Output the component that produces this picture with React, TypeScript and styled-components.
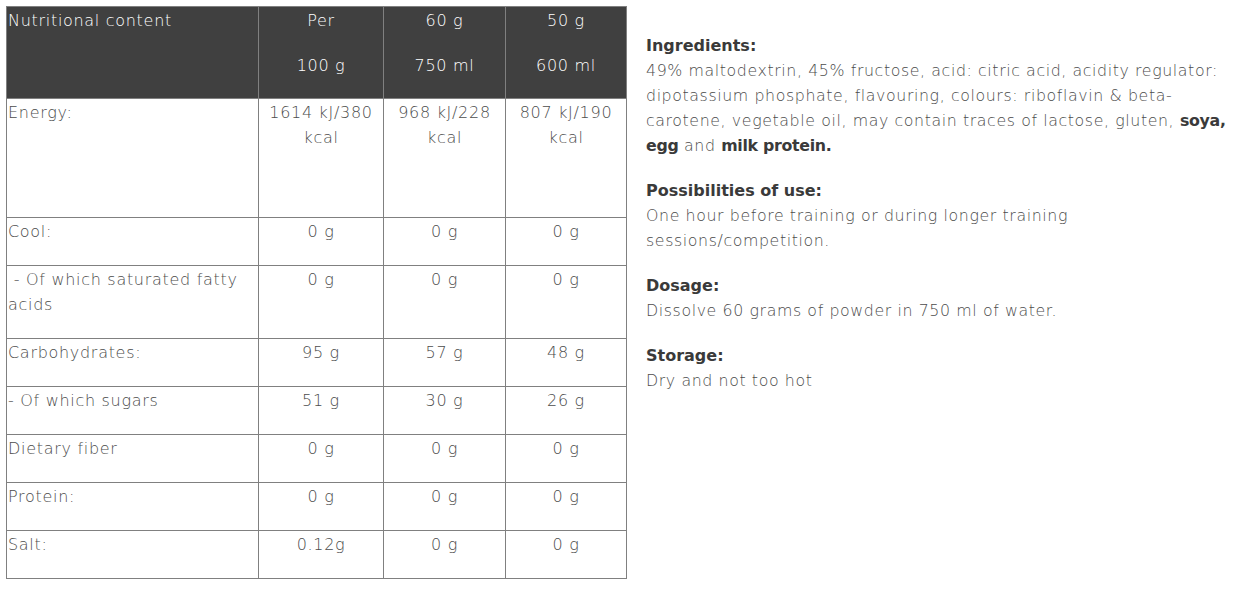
import React from "react";
import styled, { createGlobalStyle } from "styled-components";

const Global = createGlobalStyle`
  html, body { margin: 0; padding: 0; background: #fff; }
  body { font-family: "DejaVu Sans", sans-serif; }
`;

const Page = styled.div`
  display: flex;
  align-items: flex-start;
  gap: 19px;
  padding: 6px;
`;

const Table = styled.table`
  border-collapse: collapse;
  width: 620px;
  flex: none;
  table-layout: fixed;
  font-family: "DejaVu Sans", sans-serif;
  font-weight: 300;
  font-size: 16px;
  letter-spacing: 0.7px;
  line-height: 25px;
  color: #4c4c4c;
`;

const HeadCell = styled.th<{ $align?: string }>`
  background: #404040;
  color: #fff;
  font-weight: 300;
  border: 1px solid #808080;
  text-align: ${(p) => p.$align || "center"};
  vertical-align: top;
  padding: 1px 1px 19px;
  height: 92px;
  box-sizing: border-box;
`;

const HeadLine = styled.span`
  display: block;
  & + & { margin-top: 20px; }
`;

const Cell = styled.td<{ $align?: string; $h?: number }>`
  border: 1px solid #808080;
  text-align: ${(p) => p.$align || "center"};
  vertical-align: top;
  padding: 1px 1px 0;
  height: ${(p) => p.$h || 48}px;
  box-sizing: border-box;
`;

const Side = styled.div`
  padding-top: 27px;
  font-family: "DejaVu Sans", sans-serif;
  font-size: 15.8px;
  letter-spacing: 0.6px;
  line-height: 25px;
  color: #4c4c4c;
  font-weight: 300;
  white-space: nowrap;
`;

const Section = styled.section`
  margin-bottom: 20px;
`;

const Title = styled.h3`
  margin: 0;
  font-size: 16px;
  font-weight: 700;
  letter-spacing: 0;
  color: #3a3a3a;
  line-height: 25px;
`;

const Text = styled.p`
  margin: 0;
`;

const Strong = styled.strong`
  font-weight: 700;
  letter-spacing: -0.3px;
  color: #3a3a3a;
`;

type Row = { label: string; v: [string, string, string]; h?: number };

const rows: Row[] = [
  { label: "Energy:", v: ["1614 kJ/380 kcal", "968 kJ/228 kcal", "807 kJ/190 kcal"], h: 119 },
  { label: "Cool:", v: ["0 g", "0 g", "0 g"] },
  { label: "\u00a0- Of which saturated fatty acids", v: ["0 g", "0 g", "0 g"], h: 73 },
  { label: "Carbohydrates:", v: ["95 g", "57 g", "48 g"] },
  { label: "- Of which sugars", v: ["51 g", "30 g", "26 g"] },
  { label: "Dietary fiber", v: ["0 g", "0 g", "0 g"] },
  { label: "Protein:", v: ["0 g", "0 g", "0 g"] },
  { label: "Salt:", v: ["0.12g", "0 g", "0 g"] },
];

export default function App() {
  return (
    <>
      <Global />
      <Page>
        <Table>
          <colgroup>
            <col style={{ width: 252 }} />
            <col style={{ width: 125 }} />
            <col style={{ width: 122 }} />
            <col style={{ width: 121 }} />
          </colgroup>
          <thead>
            <tr>
              <HeadCell $align="left">Nutritional content</HeadCell>
              <HeadCell>
                <HeadLine>Per</HeadLine>
                <HeadLine>100 g</HeadLine>
              </HeadCell>
              <HeadCell>
                <HeadLine>60 g</HeadLine>
                <HeadLine>750 ml</HeadLine>
              </HeadCell>
              <HeadCell>
                <HeadLine>50 g</HeadLine>
                <HeadLine>600 ml</HeadLine>
              </HeadCell>
            </tr>
          </thead>
          <tbody>
            {rows.map((r) => (
              <tr key={r.label}>
                <Cell $align="left" $h={r.h}>{r.label}</Cell>
                {r.v.map((x, i) => (
                  <Cell key={i} $h={r.h}>{x}</Cell>
                ))}
              </tr>
            ))}
          </tbody>
        </Table>
        <Side>
          <Section>
            <Title>Ingredients:</Title>
            <Text>
              49% maltodextrin, 45% fructose, acid: citric acid, acidity regulator:
              <br />
              dipotassium phosphate, flavouring, colours: riboflavin &amp; beta-
              <br />
              carotene, vegetable oil, may contain traces of lactose, gluten, <Strong>soya,</Strong>
              <br />
              <Strong>egg</Strong> and <Strong>milk protein.</Strong>
            </Text>
          </Section>
          <Section>
            <Title>Possibilities of use:</Title>
            <Text>
              One hour before training or during longer training
              <br />
              sessions/competition.
            </Text>
          </Section>
          <Section>
            <Title>Dosage:</Title>
            <Text>Dissolve 60 grams of powder in 750 ml of water.</Text>
          </Section>
          <Section>
            <Title>Storage:</Title>
            <Text>Dry and not too hot</Text>
          </Section>
        </Side>
      </Page>
    </>
  );
}
